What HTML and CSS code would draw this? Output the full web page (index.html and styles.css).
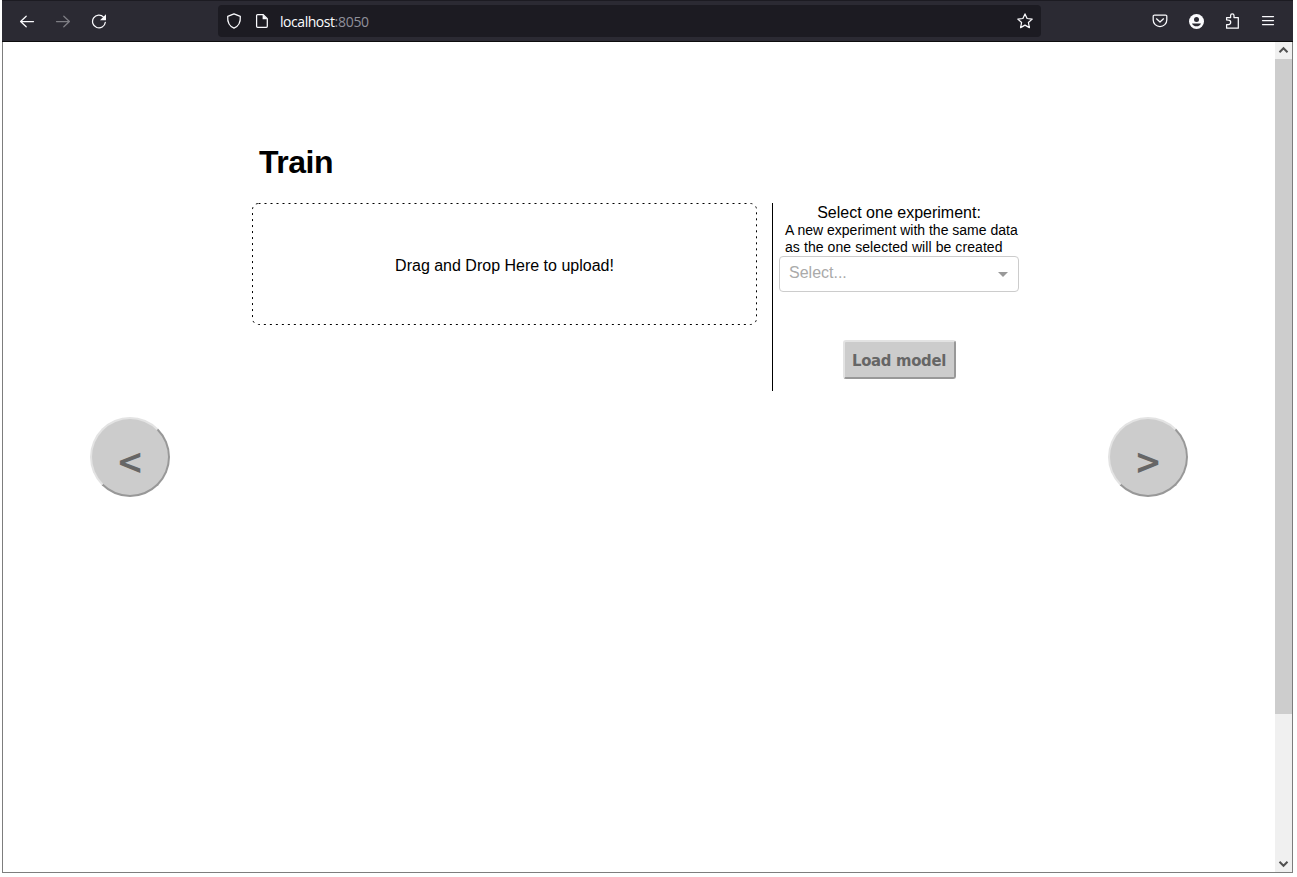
FILE: index.html
```
<!DOCTYPE html>
<html lang="en">
<head>
<meta charset="utf-8">
<title>Train</title>
<link rel="stylesheet" href="styles.css">
</head>
<body>
<div class="window">
  <header class="toolbar">
    <nav class="nav">
      <svg class="icon" viewBox="0 0 16 16"><path d="M14.500 8.500H1.600M7.200 3.200 1.600 8.500l5.600 5.300"/></svg>
      <svg class="icon icon-off" viewBox="0 0 16 16"><path d="M1.500 8.500h12.900M8.800 3.200 14.400 8.500l-5.600 5.300"/></svg>
      <svg class="icon" viewBox="0 0 16 16"><path d="M12.600 4.100A6.400 6.400 0 1 0 14.300 9.400"/><path class="solid" d="M15 1.300v5.400a.5.5 0 0 1-.5.5H9z"/></svg>
    </nav>
    <div class="address">
      <svg class="icon" viewBox="0 0 16 16"><path d="M8 .8 14.300 3.400C14.700 9 12.500 13.300 8 15.200 3.500 13.300 1.300 9 1.700 3.400z"/></svg>
      <svg class="icon icon-page" viewBox="0 0 16 16"><path d="M3.600 1.500H9L13.300 5.800V13.300a1 1 0 0 1-1 1H3.600a1 1 0 0 1-1-1V2.500a1 1 0 0 1 1-1z"/><path class="solid" d="M8.600 1.500v4.800h4.800z"/></svg>
      <span class="url">localhost<span class="port">:8050</span></span>
      <svg class="icon" viewBox="0 0 16 16"><path d="m8 .9 2.100 4.600 5.100.6-3.800 3.400 1 5.100L8 12.100l-4.400 2.500 1-5.100L.8 6.100l5.100-.6z"/></svg>
    </div>
    <div class="tools">
      <svg class="icon" viewBox="0 0 16 16"><path d="M2.500 2h11a1.300 1.300 0 0 1 1.300 1.300V7A6.800 6.500 0 0 1 1.200 7V3.300A1.300 1.300 0 0 1 2.500 2z"/><path d="m4.500 5.800 3.500 3.200 3.500-3.200"/></svg>
      <svg class="icon" viewBox="0 0 16 16"><circle class="solid" cx="8.500" cy="8.500" r="7.500"/><circle class="hole" cx="8.500" cy="6.500" r="2.500"/><path class="hole" d="M4 10.500h9A4.800 4.300 0 0 1 4 10.500z"/></svg>
      <svg class="icon" viewBox="0 0 16 16"><path d="M2.600 7V4.500h4V2.600a1.700 1.700 0 0 1 3.400 0v1.900h4.300V15.200H2.600V11.500h1.900a2.200 2.200 0 0 0 0-4.400z"/></svg>
      <svg class="icon" viewBox="0 0 16 16"><path d="M2.500 3.500h11M2.500 7.500h11M2.500 11.500h11"/></svg>
    </div>
  </header>
  <div class="viewport">
    <main class="page">
      <button class="round">&lt;</button>
      <section class="content">
        <h1>Train</h1>
        <div class="columns">
          <div class="dropzone">
            <svg class="dashes" viewBox="0 0 505 122"><rect x=".5" y=".5" width="504" height="121" rx="6"/></svg>
            Drag and Drop Here to upload!
          </div>
          <div class="experiment">
            <div class="label">Select one experiment:</div>
            <div class="hint">A new experiment with the same data<br><span class="second">as the one selected will be created</span></div>
            <div class="select"><span>Select...</span><i class="caret"></i></div>
            <button class="load">Load model</button>
          </div>
        </div>
      </section>
      <button class="round">&gt;</button>
    </main>
    <aside class="scrollbar">
      <svg class="arrow" viewBox="0 0 17 17"><path d="m4.500 10.200 4-4 4 4"/></svg>
      <div class="thumb"></div>
      <svg class="arrow arrow-down" viewBox="0 0 17 17"><path d="m4.500 6.800 4 4 4-4"/></svg>
    </aside>
  </div>
</div>
</body>
</html>
```
FILE: styles.css
```
* { box-sizing: border-box; }
body { margin: 0; background: #fff; font-family: "Liberation Sans", Arial, sans-serif; font-size: 16px; color: #000; overflow: hidden; }
button { margin: 0; background: #ccc; color: #666; border: 2px solid; border-color: #e3e3e3 #989898 #989898 #e3e3e3; font-family: "DejaVu Sans", sans-serif; font-stretch: condensed; font-weight: 700; }

.window { width: 1291px; height: 873px; margin-left: 2px; border: 1px solid #7d7d7d; border-top: 0; display: flex; flex-direction: column; }

.toolbar { height: 42px; flex: none; margin: 0 -1px; background: #2b2a33; border-top: 1px solid #1c1b22; border-bottom: 1px solid #0c0c0d; display: flex; align-items: center; padding-left: 17px; }
.icon { width: 16px; height: 16px; flex: none; fill: none; stroke: #fbfbfe; stroke-width: 1.25; stroke-linejoin: round; stroke-linecap: round; }
.icon-off { opacity: .4; }
.icon .solid { fill: #fbfbfe; stroke: none; }
.icon .hole { fill: #2b2a33; stroke: none; }
.nav { display: flex; gap: 20px; width: 199px; }
.address { width: 823px; height: 32px; border-radius: 4px; background: #1c1b22; display: flex; align-items: center; padding: 0 8px; }
.icon-page { margin-left: 12px; }
.url { flex: 1; margin-left: 10px; padding-top: 2px; font-family: "Open Sans", sans-serif; font-size: 14px; letter-spacing: -.45px; line-height: 20px; color: #fbfbfe; }
.port { color: #8f8f9a; letter-spacing: -.3px; }
.tools { display: flex; gap: 20px; margin-left: 111px; }

.viewport { flex: 1; display: flex; }
.page { flex: 1; display: flex; align-items: flex-start; }
.round { width: 80px; height: 80px; border-radius: 50%; margin: 375px 0 0 87px; padding: 10px 0 0; font-size: 36px; line-height: 60px; }
.content { width: 767px; margin: 102px 0 0 82px; }
.content + .round { margin-left: 89px; }
h1 { margin: 0 0 22px 7px; font-size: 32px; line-height: 37px; letter-spacing: -.5px; }
.columns { display: flex; gap: 15px; }
.dropzone { position: relative; width: 505px; height: 122px; padding-top: 4px; display: flex; align-items: center; justify-content: center; }
.dashes { position: absolute; inset: 0; width: 505px; height: 122px; fill: none; stroke: #000; stroke-width: 1; stroke-dasharray: 2 4; }
.experiment { width: 247px; height: 188px; border-left: 1px solid #000; padding: 1px 0 0 6px; display: flex; flex-direction: column; align-items: center; }
.label { line-height: 18px; }
.hint { width: 240px; padding-left: 6px; font-size: 14px; line-height: 17px; white-space: nowrap; }
.second { letter-spacing: .08px; }
.select { width: 240px; height: 36px; border: 1px solid #ccc; border-radius: 4px; padding: 0 10px 0 9px; color: #aaa; line-height: 32px; display: flex; justify-content: space-between; }
.caret { margin-top: 15px; width: 0; height: 0; border: 5px solid transparent; border-top-color: #999; border-bottom: 0; }
.load { width: 113px; height: 39px; margin-top: 48px; border-radius: 3px; padding: 1px 0 0; font-size: 16.500px; letter-spacing: -.3px; white-space: nowrap; }

.scrollbar { width: 17px; background: #f0f0f0; display: flex; flex-direction: column; }
.arrow { width: 17px; height: 17px; fill: none; stroke: #505050; stroke-width: 2; }
.thumb { height: 655px; background: #cdcdcd; }
.arrow-down { margin-top: auto; }
```
